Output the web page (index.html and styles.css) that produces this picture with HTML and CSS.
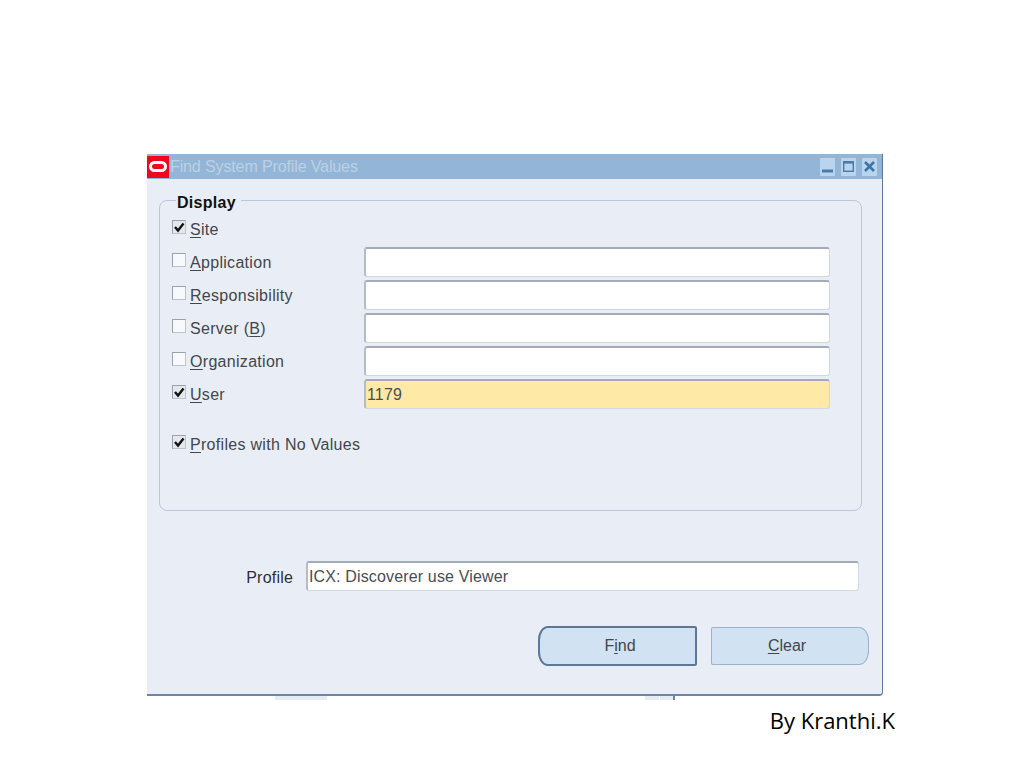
FILE: index.html
```html
<!DOCTYPE html>
<html lang="en">
<head>
<meta charset="utf-8">
<title>Find System Profile Values</title>
<link rel="stylesheet" href="styles.css">
</head>
<body>
<main class="page">
  <section class="window">
    <header class="titlebar">
      <span class="logo"><span class="logo-ring"></span></span>
      <span class="title">Find System Profile Values</span>
      <span class="controls">
        <span class="ctl"><svg viewBox="0 0 15 18" width="15" height="18"><rect x="2" y="11.5" width="11" height="3" fill="#4a7cab"/></svg></span>
        <span class="ctl"><svg viewBox="0 0 15 18" width="15" height="18"><rect x="2.7" y="3.7" width="9.6" height="9.6" fill="none" stroke="#4a7cab" stroke-width="1.4"/><rect x="2" y="3" width="11" height="2.6" fill="#4a7cab"/></svg></span>
        <span class="ctl"><svg viewBox="0 0 15 18" width="15" height="18"><path d="M3 4 12 13M12 4 3 13" stroke="#3f74a6" stroke-width="2.6" fill="none"/></svg></span>
      </span>
    </header>
    <div class="body">
      <fieldset class="group">
        <legend class="legend">Display</legend>
        <div class="rows">
          <div class="row">
            <span class="check on"><svg viewBox="0 0 12 12" width="12" height="12"><path d="M2 6 5 9.5 10.5 2.5" fill="none" stroke="#111" stroke-width="2.4"/></svg></span>
            <span class="label"><u>S</u>ite</span>
          </div>
          <div class="row">
            <span class="check"></span>
            <span class="label"><u>A</u>pplication</span>
            <div class="field"></div>
          </div>
          <div class="row">
            <span class="check"></span>
            <span class="label"><u>R</u>esponsibility</span>
            <div class="field"></div>
          </div>
          <div class="row">
            <span class="check"></span>
            <span class="label">Server (<u>B</u>)</span>
            <div class="field"></div>
          </div>
          <div class="row">
            <span class="check"></span>
            <span class="label"><u>O</u>rganization</span>
            <div class="field"></div>
          </div>
          <div class="row">
            <span class="check on"><svg viewBox="0 0 12 12" width="12" height="12"><path d="M2 6 5 9.5 10.5 2.5" fill="none" stroke="#111" stroke-width="2.4"/></svg></span>
            <span class="label"><u>U</u>ser</span>
            <div class="field required">1179</div>
          </div>
          <div class="row row-gap">
            <span class="check on"><svg viewBox="0 0 12 12" width="12" height="12"><path d="M2 6 5 9.5 10.5 2.5" fill="none" stroke="#111" stroke-width="2.4"/></svg></span>
            <span class="label wide"><u>P</u>rofiles with No Values</span>
          </div>
        </div>
      </fieldset>
      <div class="profile">
        <span class="profile-label">Profile</span>
        <div class="field profile-field">ICX: Discoverer use Viewer</div>
      </div>
      <div class="buttons">
        <button class="btn btn-find" type="button">F<u>i</u>nd</button>
        <button class="btn btn-clear" type="button"><u>C</u>lear</button>
      </div>
    </div>
  </section>
  <div class="remnants">
    <span class="bit bit-a"></span>
    <span class="bit bit-b"></span>
    <span class="bit bit-c"></span>
  </div>
  <p class="credit">By Kranthi.K</p>
</main>
</body>
</html>
```
FILE: styles.css
```css
* { box-sizing: border-box; }
html, body { margin: 0; background: #fff; }
.page {
  width: 1024px;
  height: 768px;
  padding: 154px 0 0 147px;
  overflow: hidden;
  font-family: "Liberation Sans", Arial, sans-serif;
  font-size: 16px;
  letter-spacing: 0.3px;
  color: #43464b;
}
.window {
  width: 736px;
  height: 542px;
  background: #e9eef6;
  border-right: 1px solid #5f7899;
  border-bottom: 2px solid #6d84a6;
  border-bottom-right-radius: 4px;
}
.titlebar {
  height: 25px;
  background: #93b6d8;
  display: flex;
  align-items: center;
}
.logo {
  width: 22px;
  height: 22px;
  background: #f0061d;
  display: flex;
  align-items: center;
  justify-content: center;
}
.logo-ring {
  width: 18px;
  height: 11px;
  border: 3px solid #fff;
  border-radius: 6px;
}
.title {
  margin-left: 1px;
  color: #bdd0e5;
  letter-spacing: -0.12px;
  flex: 1;
}
.controls {
  display: flex;
  gap: 6px;
  margin-right: 5px;
}
.ctl {
  width: 15px;
  height: 18px;
  background: #b9d4ee;
  border-radius: 1px;
  display: flex;
}
.body {
  padding: 11px 0 0 12px;
}
.group {
  width: 703px;
  height: 321px;
  margin: 0;
  padding: 0 0 0 12px;
  border: 1px solid #b7c8dc;
  border-radius: 8px;
  min-width: 0;
}
.legend {
  margin-left: 4px;
  padding: 0 5px 0 1px;
  height: 20px;
  line-height: 26px;
  font-weight: bold;
  letter-spacing: 0.3px;
  color: #111;
}
.rows {
  display: grid;
  grid-template-rows: repeat(6, 30px) auto;
  row-gap: 3px;
  padding-top: 4px;
}
.row {
  display: flex;
  align-items: center;
}
.row-gap { margin-top: 17px; height: 30px; }
.check {
  width: 14px;
  height: 14px;
  margin: -4px 4px 0 0;
  background: #f7f9fc;
  border: 1px solid #bcc3cc;
  border-top-color: #9aa2ac;
  border-left-color: #9aa2ac;
  display: flex;
  align-items: center;
  justify-content: center;
  flex: none;
}
.check.on { background: #e4e8ee; }
.label {
  width: 174px;
  flex: none;
  padding-top: 2px;
  white-space: nowrap;
}
.label u, .btn u { text-underline-offset: 2px; }
.field {
  width: 466px;
  height: 30px;
  line-height: 28px;
  padding-left: 1px;
  background: #fff;
  border: 1px solid #cfd8e4;
  border-top: 2px solid #a3abb6;
  border-left: 2px solid #b4bcc7;
  border-radius: 3px;
  letter-spacing: 0.15px;
  color: #4a4d52;
}
.field.required { background: #ffe9a6; }
.profile {
  display: flex;
  align-items: center;
  justify-content: flex-end;
  width: 700px;
  margin-top: 50px;
}
.profile-label {
  margin-right: 13px;
  padding-top: 4px;
  letter-spacing: 0.2px;
  color: #2d3036;
}
.profile-field { width: 553px; }
.buttons {
  display: flex;
  align-items: center;
  justify-content: flex-end;
  gap: 14px;
  width: 710px;
  margin-top: 35px;
}
.btn {
  width: 159px;
  font: inherit;
  letter-spacing: 0;
  color: #43464b;
  background: #d1e2f3;
  padding: 0;
}
.btn-find {
  height: 40px;
  padding-left: 5px;
  border: 2px solid #5d7896;
  border-radius: 10px 2px 2px 10px / 14px 2px 2px 14px;
}
.btn-clear {
  width: 158px;
  height: 38px;
  padding-right: 6px;
  border: 1px solid #9db2c9;
  border-radius: 2px 10px 10px 2px / 2px 14px 14px 2px;
}
.remnants {
  display: flex;
  height: 4px;
}
.bit { display: block; height: 4px; background: #e6ebf4; }
.bit-a { width: 52px; margin-left: 128px; }
.bit-b { width: 14px; margin-left: 318px; }
.bit-c { width: 15px; margin-left: 1px; border-right: 2px solid #6d84a6; }
.credit {
  margin: 5px 129px 0 0;
  text-align: right;
  font-family: "Open Sans", sans-serif;
  font-size: 22px;
  line-height: 30px;
  letter-spacing: 0;
  color: #000;
}
```
